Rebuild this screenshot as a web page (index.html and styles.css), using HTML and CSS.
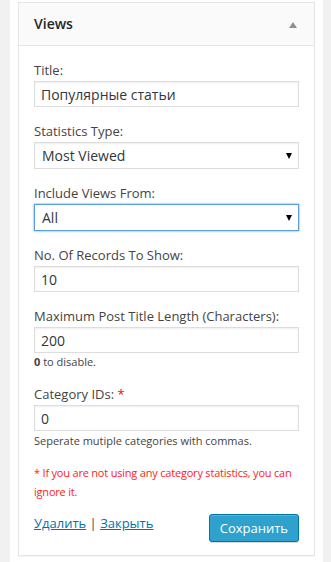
FILE: index.html
```html
<!DOCTYPE html>
<html>
<head>
	<title>Views widget</title>
	<link rel="stylesheet" href="styles.css">
	<meta charset="utf-8">
</head>
<body>
	<div class="sidebar">
		<div class="widget">
			<div class="widget__top">
				<h3 class="widget__title">Views</h3>
				<svg class="widget__toggle" width="8" height="6" viewBox="0 0 8 6"><path d="M4 0 L8 6 L0 6 Z" fill="#8c9196"/></svg>
			</div>

			<div class="widget__inside">
				<div class="field">
					<label>Title:</label>
					<input class="text__input" type="text" value="Популярные статьи">
				</div>

				<div class="field">
					<label>Statistics Type:</label>
					<div class="select__wrap">
						<select class="select__input">
							<option>Most Viewed</option>
						</select>
					</div>
				</div>

				<div class="field">
					<label>Include Views From:</label>
					<div class="select__wrap">
						<select class="select__input select__input--focus">
							<option>All</option>
						</select>
					</div>
				</div>

				<div class="field">
					<label>No. Of Records To Show:</label>
					<input class="text__input" type="text" value="10">
				</div>

				<div class="field">
					<label>Maximum Post Title Length (Characters):</label>
					<input class="text__input" type="text" value="200">
					<small class="hint"><strong>0</strong> to disable.</small>
				</div>

				<div class="field field--last">
					<label>Category IDs: <span class="required">*</span></label>
					<input class="text__input" type="text" value="0">
					<small class="hint hint--gap">Seperate mutiple categories with commas.</small>
				</div>

				<p class="note">* If you are not using any category statistics, you can ignore it.</p>

				<div class="actions">
					<div class="actions__links">
						<a href="#">Удалить</a> | <a href="#">Закрыть</a>
					</div>
					<button class="save__button">Сохранить</button>
				</div>
			</div>
		</div>
	</div>
</body>
</html>
```

FILE: styles.css
```css
* {
	box-sizing: border-box;
	margin: 0;
	padding: 0;
}

body {
	background: #f1f1f1;
	font-family: "Open Sans", sans-serif;
	font-size: 13px;
	color: #444;
	height: 562px;
	overflow: hidden;
}

.sidebar {
	margin-left: 10px;
	width: 313px;
	min-height: 562px;
	background: #fff;
	padding: 2px 8px 8px;
}

.widget {
	border: 1px solid #e5e5e5;
	background: #fff;
	box-shadow: 0 1px 1px rgba(0, 0, 0, .04);
}

.widget__top {
	height: 43px;
	background: #fafafa;
	border-bottom: 1px solid #e5e5e5;
	display: flex;
	align-items: center;
	justify-content: space-between;
	padding: 0 17px 0 15px;
}

.widget__title {
	font-size: 14px;
	font-weight: 600;
	color: #23282d;
	margin-top: -1px;
}

.widget__toggle {
	display: block;
	margin-top: 1px;
}

.widget__inside {
	padding: 15px 15px 13px;
	display: flex;
	flex-direction: column;
}

.field {
	display: flex;
	flex-direction: column;
	margin-bottom: 15px;
}

.field--last {
	margin-bottom: 14px;
}

.field label {
	line-height: 18px;
	margin-bottom: 2px;
}

.required {
	color: #f00;
}

.text__input,
.select__input {
	width: 100%;
	height: 26px;
	border: 1px solid #ddd;
	box-shadow: inset 0 1px 2px rgba(0, 0, 0, .07);
	background: #fff;
	font-family: "Open Sans", sans-serif;
	font-size: 14px;
	color: #32373c;
	padding: 0 6px;
	outline: none;
	border-radius: 0;
}

.select__wrap {
	position: relative;
}

.select__input {
	appearance: none;
	-webkit-appearance: none;
	height: 27px;
	padding: 0 6px 0 7px;
}

.select__input--focus {
	border-color: #5b9dd9;
	box-shadow: 0 0 2px rgba(30, 140, 190, .8);
}

.select__wrap::after {
	content: '';
	position: absolute;
	right: 7px;
	top: 11px;
	border-left: 3px solid transparent;
	border-right: 3px solid transparent;
	border-top: 6px solid #000;
}

.hint {
	display: block;
	font-size: 11px;
	line-height: 16px;
	margin-top: 1px;
}

.hint--gap {
	margin-top: 2px;
}

.hint strong {
	font-weight: 700;
}

.note {
	color: #f22;
	font-size: 11px;
	letter-spacing: -0.2px;
	line-height: 19px;
	margin-bottom: 13px;
}

.actions {
	display: flex;
	justify-content: space-between;
	align-items: flex-start;
}

.actions__links {
	line-height: 18px;
	color: #444;
}

.actions__links a {
	color: #0073aa;
	text-decoration: underline;
}

.save__button {
	height: 28px;
	padding: 0 10px 1px;
	font-family: "Open Sans", sans-serif;
	font-size: 13px;
	color: #fff;
	background: #2ea2cc;
	border: 1px solid #0074a2;
	border-radius: 3px;
	box-shadow: inset 0 1px 0 rgba(120, 200, 230, .5), 0 1px 0 rgba(0, 0, 0, .15);
}
```
